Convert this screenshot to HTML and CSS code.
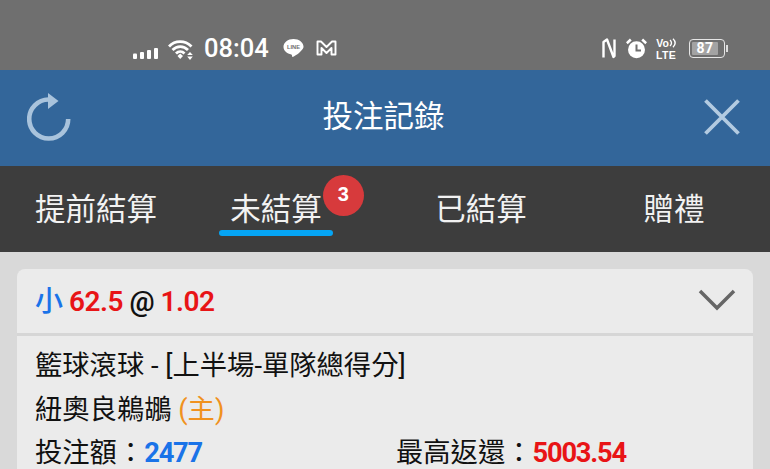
FILE: index.html
```html
<!DOCTYPE html>
<html lang="zh-Hant">
<head>
<meta charset="utf-8">
<title>投注記錄</title>
<link rel="stylesheet" href="styles.css">
</head>
<body>
<div class="status">
  <div class="status-left">
    <svg class="sig" width="25" height="12" viewBox="0 0 25 12"><rect x="0" y="6.500" width="4" height="5.500" rx="1"/><rect x="7" y="5" width="4" height="7" rx="1"/><rect x="14" y="3" width="4" height="9" rx="1"/><rect x="21" y="1" width="4" height="11" rx="1"/></svg>
    <svg class="wifi" width="26" height="21" viewBox="0 0 26 21"><path d="M1 7.500C7 1 17 1 23.500 7.500M4.500 11C9 6.500 15.500 6.500 20 11M8 14.500C10.500 12 14 12 16.500 14.500" fill="none" stroke="#fff" stroke-width="2.800"/><path d="M9.500 17L12.200 14.500 15 17 12.200 20Z" fill="#fff"/><path d="M22 13l2.800 3h-5.600zM22 21l-2.800-3.500h5.600z" fill="#fff"/></svg>
    <span class="time">08:04</span>
    <svg class="line" width="21" height="20" viewBox="0 0 22 20"><path d="M11 .5C5.200.5.500 4.200.500 8.800c0 4.200 3.600 7.400 8.300 8 .8.200.6 2.700 1.200 2.700 1 0 6-3 9-6.500 1.400-1.600 2.500-2.800 2.500-4.200C21.500 4.200 16.800.5 11 .5Z" fill="#fff"/><text x="11" y="11.500" class="line-text">LINE</text></svg>
    <svg class="gm" width="21" height="16" viewBox="0 0 21 16"><path d="M1.500 14.500V1.500h3.500l5.500 5.500 5.500-5.500h3.500v13h-4V8l-5 5-5-5v6.500Z" fill="none" stroke="#fff" stroke-width="1.900" stroke-linejoin="round"/></svg>
  </div>
  <div class="status-right">
    <svg class="nfc" width="14" height="22" viewBox="0 0 14 22"><path d="M1.500 19.500V4L5 1.500l6.500 17.500 1-1V1.500" fill="none" stroke="#fff" stroke-width="2.400" stroke-linejoin="round"/></svg>
    <svg class="alarm" width="21" height="21" viewBox="0 0 21 21"><circle cx="10.500" cy="11.800" r="8.500" fill="#fff"/><path d="M.8 5.200L4.800 1.500M20.200 5.200L16.200 1.500" stroke="#fff" stroke-width="2.600"/><path d="M10.500 6.500v6h4.500" fill="none" stroke="#6f6f6f" stroke-width="2"/></svg>
    <div class="volte"><span class="vo">Vo<svg width="7" height="10" viewBox="0 0 7 10"><path d="M1 2c2 2 2 4 0 6M4 .8c3 3 3 5.400 0 8.400" fill="none" stroke="#fff" stroke-width="1.300"/></svg></span><span class="lte">LTE</span></div>
    <div class="battery"><div class="batt-body"><span class="batt-level">87</span></div><i class="batt-cap"></i></div>
  </div>
</div>
<header class="topbar">
  <svg class="reload" width="44" height="48" viewBox="0 0 44 48"><path d="M41.200 26A19.500 19.500 0 1 1 21.500 6.500" fill="none" stroke="#a9c3dc" stroke-width="4.600"/><path d="M21 0L31.500 8 21 16Z" fill="#a9c3dc"/></svg>
  <h1 class="title">投注記錄</h1>
  <svg class="close" width="36" height="36" viewBox="0 0 36 36"><path d="M1.500 1.500L34.500 34.500M34.500 1.500L1.500 34.500" stroke="#b3cbe1" stroke-width="3.800"/></svg>
</header>
<nav class="tabs">
  <div class="tab">提前結算</div>
  <div class="tab active"><span class="tab-label">未結算<b class="badge">3</b></span></div>
  <div class="tab">已結算</div>
  <div class="tab">贈禮</div>
</nav>
<main class="content">
  <section class="card">
    <div class="card-head">
      <div class="pick"><span class="blue side">小</span> <span class="red">62.5</span> <span class="at">@</span> <span class="red">1.02</span></div>
      <svg class="chev" width="38" height="24" viewBox="0 0 38 24"><path d="M2 3L19 20 36 3" fill="none" stroke="#666" stroke-width="3.500"/></svg>
    </div>
    <div class="card-body">
      <div class="row">籃球滾球 - [上半場-單隊總得分]</div>
      <div class="row">紐奧良鵜鶘 <span class="orange">(主)</span></div>
      <div class="row cols">
        <div class="col">投注額：<span class="blue num">2477</span></div>
        <div class="col">最高返還：<span class="red num">5003.54</span></div>
      </div>
    </div>
  </section>
</main>
</body>
</html>
```
FILE: styles.css
```css
* { box-sizing: border-box; }
html, body { margin: 0; padding: 0; }
body {
  width: 770px;
  height: 469px;
  overflow: hidden;
  background: #d9d9d9;
  font-family: Roboto, "Noto Sans CJK TC", sans-serif;
  color: #111;
}
.status {
  height: 70px;
  background: #6f6f6f;
  padding: 36px 42px 0 133px;
  display: flex;
  justify-content: space-between;
  align-items: flex-start;
  color: #fff;
}
.status-left { display: flex; align-items: center; height: 25px; }
.status-right { display: flex; align-items: center; height: 25px; }
.sig { fill: #fff; margin-top: 9px; }
.wifi { margin-left: 10px; margin-top: 1px; }
.time { font-size: 25.500px; margin-left: 10px; line-height: 25px; font-weight: 500; }
.line { margin-left: 14px; margin-top: -1px; }
.line-text { font: 700 6px "Liberation Sans", sans-serif; fill: #6f6f6f; text-anchor: middle; }
.gm { margin-left: 12px; margin-top: -1px; }
.nfc { margin-right: 10px; margin-left: -2px; }
.alarm { margin-right: 9px; }
.volte { width: 20px; display: flex; flex-direction: column; align-items: center; gap: 2px; font: 700 10.500px/10px "Liberation Sans", sans-serif; }
.vo { display: flex; align-items: center; }
.lte { letter-spacing: .3px; }
.battery { display: flex; align-items: center; margin-left: 13px; }
.batt-body { width: 36px; height: 19px; border: 1.500px solid #e6e6e6; border-radius: 4px; padding: 2px; display: flex; }
.batt-level { width: 26px; background: #a3a3a3; border-radius: 1px; color: #fff; font: 700 14px/12px Roboto, sans-serif; text-align: center; letter-spacing: .5px; }
.batt-cap { width: 2px; height: 7px; background: #ddd; margin-left: 1px; }
.topbar {
  height: 96px;
  background: #33669a;
  display: grid;
  grid-template-columns: 1fr auto 1fr;
  align-items: center;
  padding: 0 30px 0 27px;
}
.reload { margin-top: -2px; }
.title { margin: 0; font-size: 30.500px; font-weight: 400; color: #fff; line-height: 40px; margin-top: -2px; }
.close { justify-self: end; margin-top: -2px; }
.tabs {
  height: 86px;
  background: #3d3d3d;
  display: grid;
  grid-template-columns: 192px 168px 242px 144px;
}
.tab {
  font-size: 30.500px;
  color: #f2f2f2;
  text-align: center;
  line-height: 44px;
  padding-top: 22px;
}
.tab-label {
  display: inline-block;
  position: relative;
  line-height: 44px;
  height: 48px;
  padding: 0 11.500px;
  margin-top: -6px;
}
.tab-label::after {
  content: "";
  position: absolute;
  left: 0;
  right: 0;
  bottom: 0;
  height: 6px;
  border-radius: 3px;
  background: #05a5f5;
}
.badge {
  position: absolute;
  left: 104px;
  top: -13px;
  width: 41px;
  height: 41px;
  border-radius: 50%;
  background: #d73a3c;
  color: #fff;
  font: 700 20px/39px "Liberation Sans", sans-serif;
  text-align: center;
}
.content { padding: 17px 17px 0; }
.card {
  background: #ebebeb;
  border-radius: 8px 8px 0 0;
  height: 220px;
}
.card-head {
  height: 67px;
  border-bottom: 3px solid #d6d6d6;
  display: flex;
  align-items: center;
  justify-content: space-between;
  padding: 0 17px 0 18px;
}
.pick { font-size: 28px; font-weight: 600; letter-spacing: -.5px; margin-top: -4px; }
.side { font-weight: 500; }
.blue { color: #1a73e8; }
.red { color: #e81416; }
.at { color: #111; }
.orange { color: #f0921e; }
.chev { margin-top: -2px; }
.card-body { padding: 9px 18px 0; font-size: 27.300px; }
.row { height: 43.500px; line-height: 43px; white-space: nowrap; }
.cols { display: flex; }
.col { width: 361px; flex: none; }
.num { font-weight: 700; letter-spacing: -1.200px; }
```
